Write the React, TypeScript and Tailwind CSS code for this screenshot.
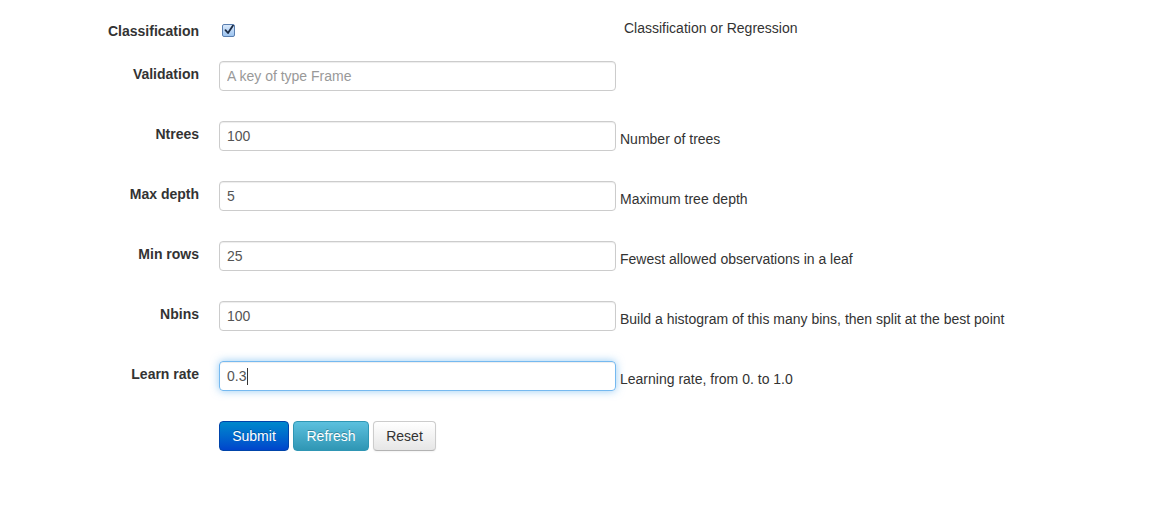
const font = { fontFamily: '"Liberation Sans", Arial, sans-serif' };

const fields = [
  { label: "Validation", value: "", placeholder: "A key of type Frame", help: "" },
  { label: "Ntrees", value: "100", help: "Number of trees" },
  { label: "Max depth", value: "5", help: "Maximum tree depth" },
  { label: "Min rows", value: "25", help: "Fewest allowed observations in a leaf" },
  { label: "Nbins", value: "100", help: "Build a histogram of this many bins, then split at the best point" },
];

function CheckBox() {
  return (
    <span className="mt-[7px] ml-[3px] flex h-[13px] w-[13px] items-center justify-center rounded-[2px] border border-[#5a7fb0] bg-gradient-to-b from-[#d9e9fb] to-[#9cc3ef]">
      <svg width="10" height="10" viewBox="0 0 10 10" className="-mt-[2px] ml-[1px]">
        <path d="M1.5 5.2 L4 8 L9 0.5" fill="none" stroke="#1b2b44" strokeWidth="1.8" strokeLinecap="round" strokeLinejoin="round" />
      </svg>
    </span>
  );
}

function Row({ label, children, help }: { label: string; children: React.ReactNode; help?: string }) {
  return (
    <div className="mb-[30px] flex items-start">
      <label className="w-[160px] shrink-0 pt-[3px] text-right text-[14px] font-bold leading-[20px] text-[#333]">{label}</label>
      <div className="ml-[20px] flex items-start">
        {children}
        {help ? <span className="ml-[4px] mt-[8px] text-[14px] leading-[20px] text-[#333]">{help}</span> : null}
      </div>
    </div>
  );
}

export default function App() {
  return (
    <div className="min-h-[525px] w-[1151px] bg-white pl-[39px] pt-[17px]" style={font}>
      <div className="mb-[20px] flex h-[24px] items-start">
        <label className="w-[160px] shrink-0 pt-[4px] text-right text-[14px] font-bold leading-[20px] text-[#333]">Classification</label>
        <div className="ml-[20px] flex items-start">
          <div className="w-[396px]">
            <CheckBox />
          </div>
          <span className="ml-[9px] mt-[1px] text-[14px] leading-[20px] text-[#333]">Classification or Regression</span>
        </div>
      </div>

      {fields.map((f) => (
        <Row key={f.label} label={f.label} help={f.help}>
          <input
            readOnly
            defaultValue={f.value}
            placeholder={f.placeholder}
            className="h-[30px] w-[397px] rounded-[4px] border border-[#ccc] px-[7px] text-[14px] text-[#555] shadow-[inset_0_1px_1px_rgba(0,0,0,0.075)] outline-none placeholder:text-[#999]"
            style={font}
          />
        </Row>
      ))}

      <Row label="Learn rate" help="Learning rate, from 0. to 1.0">
        <div className="flex h-[30px] w-[397px] items-center rounded-[4px] border border-[rgba(82,168,236,0.8)] px-[7px] text-[14px] text-[#555] shadow-[inset_0_1px_1px_rgba(0,0,0,0.075),0_0_8px_rgba(82,168,236,0.6)]">
          0.3<span className="ml-[1px] h-[17px] w-[1px] bg-[#333]" />
        </div>
      </Row>

      <div className="ml-[180px] flex gap-[4px]">
        <button className="h-[30px] w-[70px] rounded-[4px] border border-[#0044aa] bg-gradient-to-b from-[#0088cc] to-[#0044cc] text-[14px] text-white [text-shadow:0_-1px_0_rgba(0,0,0,0.25)]">
          Submit
        </button>
        <button className="h-[30px] w-[76px] rounded-[4px] border border-[#2f96b4] bg-gradient-to-b from-[#5bc0de] to-[#2f96b4] text-[14px] text-white [text-shadow:0_-1px_0_rgba(0,0,0,0.25)]">
          Refresh
        </button>
        <button className="h-[30px] w-[63px] rounded-[4px] border border-[#ccc] border-b-[#b3b3b3] bg-gradient-to-b from-white to-[#e6e6e6] text-[14px] text-[#333] shadow-[inset_0_1px_0_rgba(255,255,255,0.2),0_1px_2px_rgba(0,0,0,0.05)]">
          Reset
        </button>
      </div>
    </div>
  );
}
